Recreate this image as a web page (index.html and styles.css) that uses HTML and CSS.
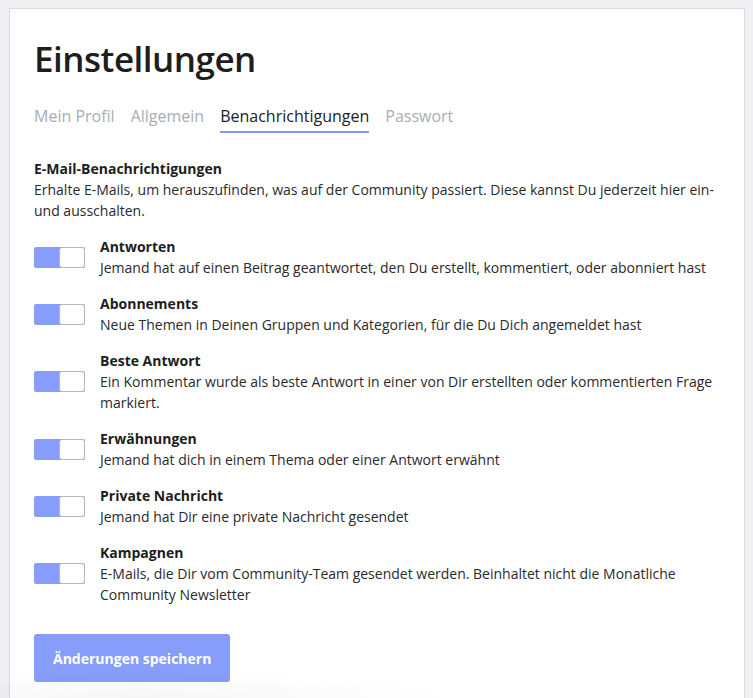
FILE: index.html
```html
<!DOCTYPE html>
<html lang="de">
<head>
<meta charset="utf-8">
<title>Einstellungen</title>
<link rel="stylesheet" href="styles.css">
</head>
<body>
<main class="card">
  <h1 class="title">Einstellungen</h1>
  <nav class="tabs">
    <a class="tab">Mein Profil</a>
    <a class="tab">Allgemein</a>
    <a class="tab active">Benachrichtigungen</a>
    <a class="tab">Passwort</a>
  </nav>
  <section class="section">
    <h2 class="section-title">E-Mail-Benachrichtigungen</h2>
    <p class="section-desc">Erhalte E-Mails, um herauszufinden, was auf der Community passiert. Diese kannst Du jederzeit hier ein- und ausschalten.</p>
    <ul class="options">
      <li class="option">
        <span class="toggle"><span class="knob"></span></span>
        <div class="option-text">
          <div class="option-title">Antworten</div>
          <div class="option-desc">Jemand hat auf einen Beitrag geantwortet, den Du erstellt, kommentiert, oder abonniert hast</div>
        </div>
      </li>
      <li class="option">
        <span class="toggle"><span class="knob"></span></span>
        <div class="option-text">
          <div class="option-title">Abonnements</div>
          <div class="option-desc">Neue Themen in Deinen Gruppen und Kategorien, für die Du Dich angemeldet hast</div>
        </div>
      </li>
      <li class="option">
        <span class="toggle"><span class="knob"></span></span>
        <div class="option-text">
          <div class="option-title">Beste Antwort</div>
          <div class="option-desc">Ein Kommentar wurde als beste Antwort in einer von Dir erstellten oder kommentierten Frage markiert.</div>
        </div>
      </li>
      <li class="option">
        <span class="toggle"><span class="knob"></span></span>
        <div class="option-text">
          <div class="option-title">Erwähnungen</div>
          <div class="option-desc">Jemand hat dich in einem Thema oder einer Antwort erwähnt</div>
        </div>
      </li>
      <li class="option">
        <span class="toggle"><span class="knob"></span></span>
        <div class="option-text">
          <div class="option-title">Private Nachricht</div>
          <div class="option-desc">Jemand hat Dir eine private Nachricht gesendet</div>
        </div>
      </li>
      <li class="option">
        <span class="toggle"><span class="knob"></span></span>
        <div class="option-text">
          <div class="option-title">Kampagnen</div>
          <div class="option-desc">E-Mails, die Dir vom Community-Team gesendet werden. Beinhaltet nicht die Monatliche Community Newsletter</div>
        </div>
      </li>
    </ul>
    <button class="save">Änderungen speichern</button>
  </section>
</main>
<div class="fade"></div>
</body>
</html>
```

FILE: styles.css
```css
html, body {
  margin: 0;
  padding: 0;
}
body {
  background: #eff0f4;
  font-family: "Open Sans", "Noto Sans", sans-serif;
  color: #2a2a2a;
  padding: 8px 8px 0 9px;
  height: 698px;
  box-sizing: border-box;
  overflow: hidden;
}
.card {
  background: #ffffff;
  border: 1px solid #dadbdd;
  border-bottom: none;
  padding: 26px 25px 40px 24px;
  min-height: 720px;
  box-sizing: border-box;
}
.title {
  margin: 0;
  font-size: 35px;
  line-height: 48px;
  font-weight: 600;
  color: #1d1d1d;
  letter-spacing: -0.5px;
}
.tabs {
  display: flex;
  gap: 16px;
  margin-top: 22px;
}
.tab {
  font-size: 16px;
  line-height: 22px;
  color: #a9adb4;
  padding-bottom: 4px;
  border-bottom: 2px solid transparent;
}
.tab.active {
  color: #222222;
  border-bottom-color: #7f95f7;
}
.section {
  margin-top: 25px;
}
.section-title {
  margin: 0;
  font-size: 14px;
  line-height: 21px;
  font-weight: 700;
  color: #1d1d1d;
}
.section-desc {
  margin: 0;
  font-size: 14px;
  line-height: 21px;
}
.options {
  list-style: none;
  margin: 15px 0 0 0;
  padding: 0;
  display: flex;
  flex-direction: column;
  gap: 15px;
}
.option {
  display: flex;
  align-items: center;
  gap: 15px;
}
.toggle {
  flex: none;
  display: flex;
  justify-content: flex-end;
  width: 51px;
  height: 21px;
  background: #879dfc;
  border-radius: 2px;
}
.knob {
  width: 26px;
  height: 21px;
  box-sizing: border-box;
  background: #ffffff;
  border: 1px solid #b4b6ba;
  border-radius: 3px;
}
.option-text {
  font-size: 14px;
  line-height: 21px;
}
.option-title {
  font-weight: 700;
  color: #1d1d1d;
}
.save {
  margin-top: 29px;
  display: block;
  height: 48px;
  padding: 0 19px;
  background: #869dfb;
  color: #ffffff;
  border: none;
  border-radius: 3px;
  font-family: "Open Sans", "Noto Sans", sans-serif;
  font-size: 14px;
  font-weight: 700;
}
.fade {
  position: fixed;
  left: 0;
  bottom: 0;
  width: 460px;
  height: 24px;
  background: radial-gradient(ellipse at 30% 100%, rgba(0, 0, 0, 0.035), rgba(0, 0, 0, 0) 70%);
  pointer-events: none;
}
```
